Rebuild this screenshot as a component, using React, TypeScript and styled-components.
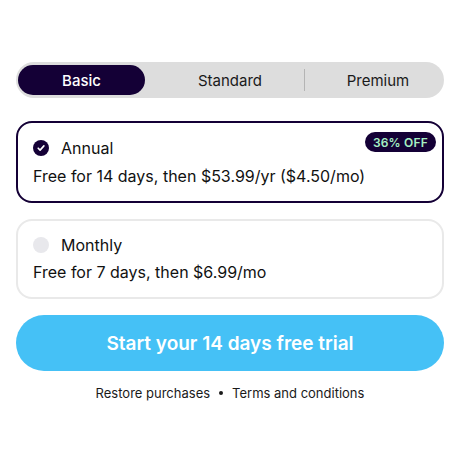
import React, { useState } from "react";
import styled, { createGlobalStyle } from "styled-components";

const Global = createGlobalStyle`
  html, body { margin: 0; padding: 0; background: #ffffff; }
  body { font-family: Inter, "Noto Sans", sans-serif; color: #111111; -webkit-font-smoothing: antialiased; }
`;

const NAVY = "#140036";

const Page = styled.div`
  width: 460px;
  height: 460px;
  box-sizing: border-box;
  padding: 62px 16px 0;
  display: flex;
  flex-direction: column;
`;

const Segmented = styled.div`
  display: grid;
  grid-template-columns: 127px 159px 1fr;
  height: 36px;
  padding: 3px 2px;
  box-sizing: border-box;
  background: #dddddd;
  border-radius: 18px;
`;

const Segment = styled.button<{ $active?: boolean; $divider?: boolean; $pad?: number }>`
  position: relative;
  border: none;
  margin: 0;
  font-family: inherit;
  font-size: 15px;
  font-weight: ${(p) => (p.$active ? 500 : 400)};
  color: ${(p) => (p.$active ? "#ffffff" : "#1a1a1a")};
  background: ${(p) => (p.$active ? NAVY : "transparent")};
  border-radius: 15px;
  padding: 0 0 0 ${(p) => p.$pad ?? 0}px;
  display: flex;
  align-items: center;
  justify-content: center;
  cursor: pointer;
  ${(p) =>
    p.$divider
      ? `&::before { content: ""; position: absolute; left: 0; top: 4px; bottom: 4px; width: 1px; background: #b4b4b4; }`
      : ""}
`;

const Cards = styled.div`
  display: flex;
  flex-direction: column;
  gap: 16px;
  margin-top: 23px;
`;

const Card = styled.div<{ $selected?: boolean }>`
  position: relative;
  border: 2px solid ${(p) => (p.$selected ? NAVY : "#e9e9e9")};
  border-radius: 16px;
  padding: ${(p) => (p.$selected ? "15px 15px" : "14px 15px 15px")};
  display: flex;
  flex-direction: column;
  gap: ${(p) => (p.$selected ? 8 : 7)}px;
  cursor: pointer;
`;

const TitleRow = styled.div`
  display: flex;
  align-items: center;
  gap: 12px;
  height: 20px;
`;

const Radio = styled.span<{ $checked?: boolean }>`
  width: 16px;
  height: 16px;
  border-radius: 50%;
  background: ${(p) => (p.$checked ? NAVY : "#e8e8ec")};
  display: flex;
  align-items: center;
  justify-content: center;
  flex-shrink: 0;
`;

const Title = styled.span`
  font-size: 16px;
  font-weight: 400;
  color: #111111;
`;

const Desc = styled.div`
  font-size: 16px;
  line-height: 20px;
  color: #111111;
`;

const Badge = styled.span`
  position: absolute;
  top: 9px;
  right: 6px;
  height: 20px;
  padding: 0 8px;
  border-radius: 10px;
  background: ${NAVY};
  color: #a6f0c4;
  font-size: 12px;
  font-weight: 600;
  letter-spacing: 0.2px;
  display: flex;
  align-items: center;
`;

const CTA = styled.button`
  margin-top: 16px;
  height: 56px;
  border: none;
  border-radius: 28px;
  background: #45c1f6;
  color: #ffffff;
  font-family: inherit;
  font-size: 19px;
  font-weight: 600;
  cursor: pointer;
`;

const Footer = styled.div`
  margin-top: 14px;
  display: flex;
  justify-content: center;
  align-items: center;
  gap: 9px;
  font-size: 13px;
  color: #1a1a1a;
`;

const Dot = styled.span`
  width: 4px;
  height: 4px;
  border-radius: 50%;
  background: #1a1a1a;
`;

const Check = () => (
  <svg width="10" height="10" viewBox="0 0 10 10" fill="none">
    <path d="M2.2 5.2 L4.1 7.1 L7.9 2.9" stroke="#ffffff" strokeWidth="1.6" strokeLinecap="round" strokeLinejoin="round" />
  </svg>
);

export default function App() {
  const [tier, setTier] = useState(0);
  const [plan, setPlan] = useState<"annual" | "monthly">("annual");
  return (
    <>
      <Global />
      <Page>
        <Segmented>
          <Segment $active={tier === 0} onClick={() => setTier(0)}>Basic</Segment>
          <Segment $active={tier === 1} $pad={11} onClick={() => setTier(1)}>Standard</Segment>
          <Segment $active={tier === 2} $pad={10} $divider onClick={() => setTier(2)}>Premium</Segment>
        </Segmented>
        <Cards>
          <Card $selected={plan === "annual"} onClick={() => setPlan("annual")}>
            <Badge>36% OFF</Badge>
            <TitleRow>
              <Radio $checked={plan === "annual"}>{plan === "annual" && <Check />}</Radio>
              <Title>Annual</Title>
            </TitleRow>
            <Desc>Free for 14 days, then $53.99/yr ($4.50/mo)</Desc>
          </Card>
          <Card $selected={plan === "monthly"} onClick={() => setPlan("monthly")}>
            <TitleRow>
              <Radio $checked={plan === "monthly"}>{plan === "monthly" && <Check />}</Radio>
              <Title>Monthly</Title>
            </TitleRow>
            <Desc>Free for 7 days, then $6.99/mo</Desc>
          </Card>
        </Cards>
        <CTA>Start your 14 days free trial</CTA>
        <Footer>
          <span>Restore purchases</span>
          <Dot />
          <span>Terms and conditions</span>
        </Footer>
      </Page>
    </>
  );
}
